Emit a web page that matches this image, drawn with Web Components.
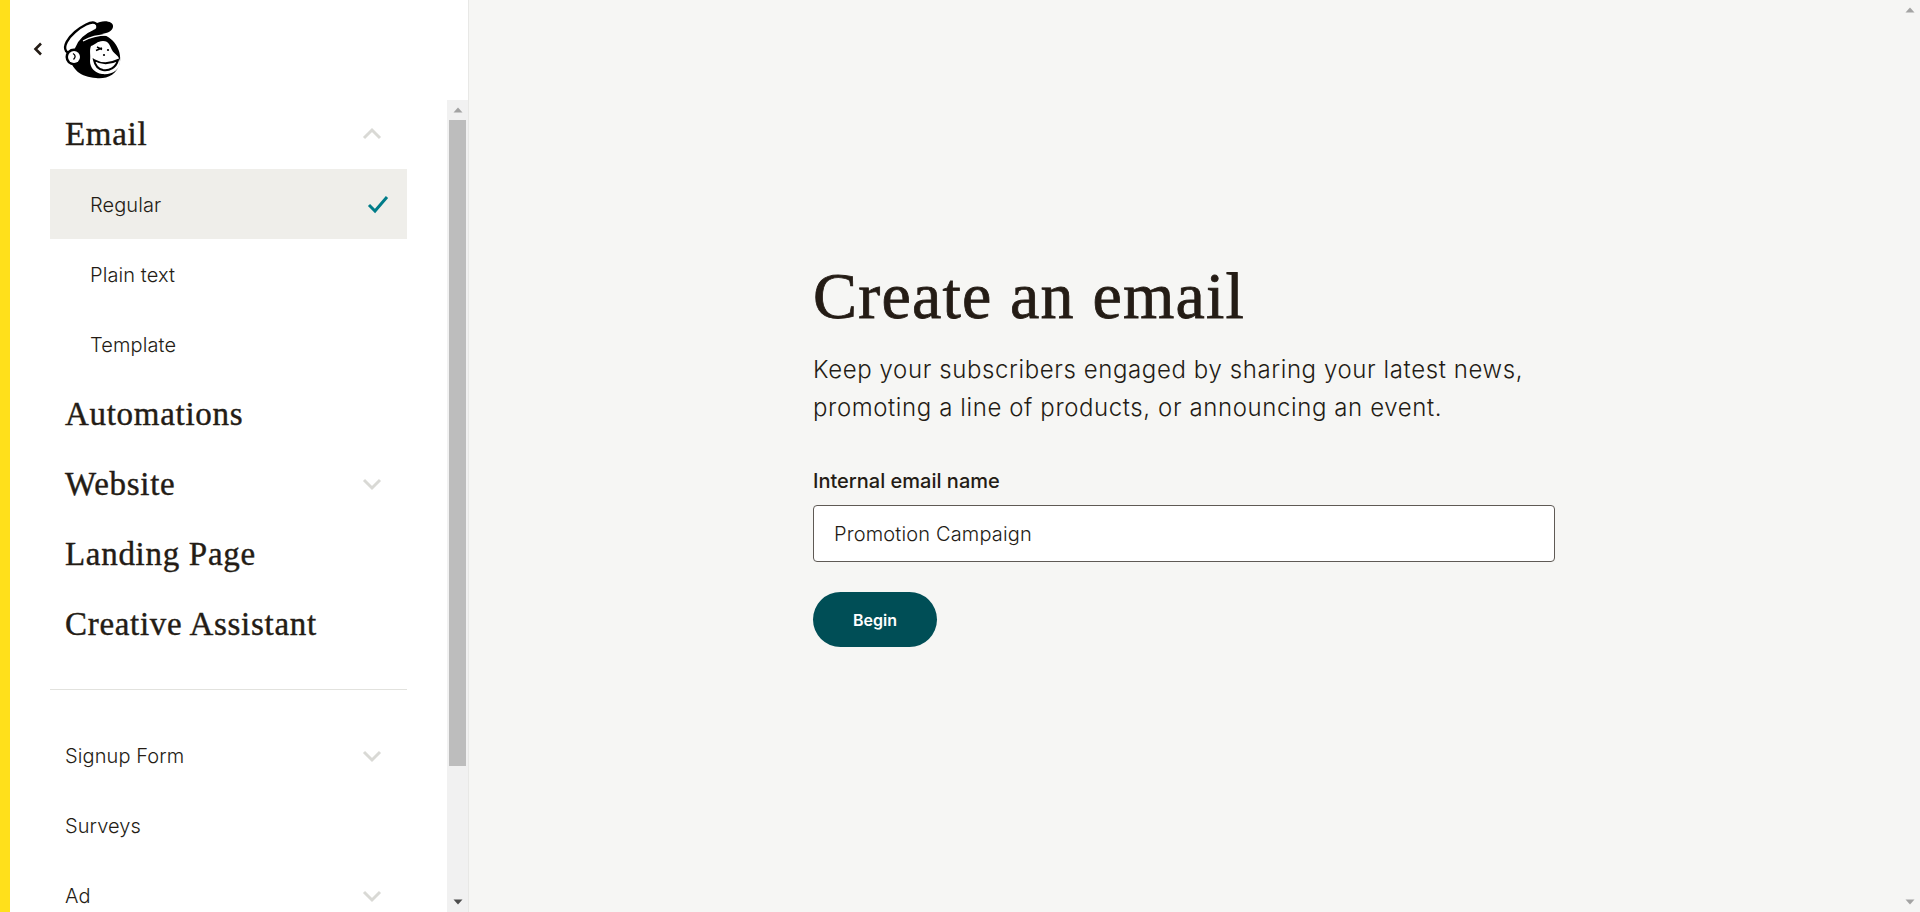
<!DOCTYPE html>
<html lang="en">
<head>
<meta charset="utf-8">
<title>Create an email</title>
<style>
  html, body { margin: 0; height: 100%; overflow: hidden; }
  body { font-family: Inter, "Liberation Sans", sans-serif; color: #241c15; }
</style>
</head>
<body>
<mc-app>
  <mc-sidebar slot="sidebar">
    <nav-item kind="head" chevron="up">Email</nav-item>
    <nav-item kind="sub" selected>Regular</nav-item>
    <nav-item kind="sub">Plain text</nav-item>
    <nav-item kind="sub">Template</nav-item>
    <nav-item kind="head">Automations</nav-item>
    <nav-item kind="head" chevron="down">Website</nav-item>
    <nav-item kind="head">Landing Page</nav-item>
    <nav-item kind="head">Creative Assistant</nav-item>
    <nav-rule></nav-rule>
    <nav-item chevron="down">Signup Form</nav-item>
    <nav-item>Surveys</nav-item>
    <nav-item chevron="down">Ad</nav-item>
  </mc-sidebar>
  <create-form slot="main"
    title="Create an email"
    label="Internal email name"
    value="Promotion Campaign"
    action="Begin">
    Keep your subscribers engaged by sharing your latest news,<br>promoting a line of products, or announcing an event.
  </create-form>
</mc-app>

<script>
// page frame: yellow edge, sidebar, main area, window scrollbar
class McApp extends HTMLElement {
  constructor() {
    super();
    this.attachShadow({ mode: 'open' }).innerHTML = `
      <style>
        :host { display: flex; height: 912px; background: #f6f6f4; }
        .edge { flex: 0 0 10px; background: #ffe01b; }
        main { flex: 1; min-width: 0; }
      </style>
      <div class="edge"></div>
      <slot name="sidebar"></slot>
      <main><slot name="main"></slot></main>
      <mc-scrollbar thumb="0" size="20" track="#f5f5f4"></mc-scrollbar>`;
  }
}

// sidebar with logo on top and the clipped nav list below
class McSidebar extends HTMLElement {
  constructor() {
    super();
    this.attachShadow({ mode: 'open' }).innerHTML = `
      <style>
        :host {
          display: flex;
          flex-direction: column;
          flex: 0 0 459px;
          box-sizing: border-box;
          background: #fff;
          border-right: 1px solid #e8e8e6;
        }
        header { flex: 0 0 100px; display: flex; align-items: flex-start; }
        .back { margin: 39px 0 0 20px; width: 16px; height: 20px; }
        .logo { margin: 10px 0 0 4px; width: 80px; height: 80px; }
        .body { flex: 1; min-height: 0; display: flex; }
        .list { flex: 1; min-width: 0; overflow: hidden; padding: 0 40px; }
        .inner { margin-top: -1px; }
      </style>
      <header>
        <svg class="back" viewBox="0 0 16 20"><path d="M11 4.500 5.500 10l5.500 5.500" fill="none" stroke="#241c15" stroke-width="2.600"/></svg>
        <svg class="logo" viewBox="0 0 80 80">
          <!-- head and cap -->
          <path d="M19 44C21 30 34 22 50 24 63 26 72 40 70 52 67 66 56 69 46 68 31 67 21 60 19 44Z" fill="#000"/>
          <path d="M41 15 50 12C56 10 64 12 63 17 62 21 58 23 52 24L41 26Z" fill="#000"/>
          <path d="M33 31C40 27 48 25 57 25" fill="none" stroke="#fff" stroke-width="1.300"/>
          <!-- brim -->
          <path d="M16 41C13 36 18 28 25 22 32 16 41 11 45 13 49 15 48 20 44 21 37 24 30 29 27 37 25 43 19 45 16 41Z" fill="#fff" stroke="#000" stroke-width="2.400"/>
          <!-- ear -->
          <circle cx="24" cy="47" r="8.500" fill="#000"/>
          <circle cx="24" cy="47" r="6" fill="#fff"/>
          <path d="M23 43.500q4 2.500 .5 6" fill="none" stroke="#000" stroke-width="1.300"/>
          <!-- face -->
          <path d="M41 36C45 35 47 31 53 31 59 31 60 36 62 40 64 44 70 46 70 52 70 60 62 65 52 64 45 63 40 58 40 51 41 45 39 41 41 36Z" fill="#fff"/>
          <path d="M46 40.500l6-2.500M47 37l5 2.500" stroke="#000" stroke-width="1.400" fill="none"/>
          <circle cx="58" cy="40" r="1.100" fill="#000"/>
          <circle cx="54" cy="45" r="1.100" fill="#000"/>
          <!-- smile -->
          <path d="M44 50C51 54 60 54 68 50 66 58 59 61 53 60 48 59 45 55 44 50Z" fill="#fff" stroke="#000" stroke-width="2"/>
        </svg>
      </header>
      <div class="body">
        <div class="list"><div class="inner"><slot></slot></div></div>
        <mc-scrollbar thumb="646" size="21" track="#f1f1f1"></mc-scrollbar>
      </div>`;
  }
}

// classic windows style scrollbar; thumb is the thumb height in px
class McScrollbar extends HTMLElement {
  connectedCallback() {
    const thumb = Number.parseInt(this.getAttribute('thumb'), 10);
    const size = this.getAttribute('size');
    this.attachShadow({ mode: 'open' }).innerHTML = `
      <style>
        :host {
          display: flex;
          flex-direction: column;
          flex: 0 0 ${size}px;
          width: ${size}px;
          background: ${this.getAttribute('track')};
        }
        .btn { flex: 0 0 20px; display: flex; align-items: center; justify-content: center; }
        .thumb { margin: 0 2px; height: ${thumb}px; background: #bdbdbd; }
        .gap { flex: 1; }
        svg { width: 10px; height: 6px; }
      </style>
      <div class="btn"><svg viewBox="0 0 10 6"><path d="M5 .5 9.500 5.500H.5Z" fill="#a3a3a3"/></svg></div>
      <div class="thumb"></div>
      <div class="gap"></div>
      <div class="btn"><svg viewBox="0 0 10 6"><path d="M5 5.500 9.500 .5H.5Z" fill="${thumb ? '#4d4d4d' : '#a3a3a3'}"/></svg></div>`;
  }
}

// one row of the sidebar nav
class NavItem extends HTMLElement {
  connectedCallback() {
    const chevron = this.getAttribute('chevron');
    const chevronPath = chevron === 'up' ? 'M2 12 10 4l8 8' : 'M2 4l8 8 8-8';
    this.attachShadow({ mode: 'open' }).innerHTML = `
      <style>
        :host {
          display: flex;
          align-items: center;
          justify-content: space-between;
          height: 70px;
          padding: 0 25px 0 15px;
          font: 300 20px/1 Inter, "Liberation Sans", sans-serif;
          letter-spacing: .1px;
          color: #241c15;
        }
        :host([kind="head"]) {
          font: 400 33px/1 "Liberation Serif", serif;
          letter-spacing: .7px;
          -webkit-text-stroke: .4px #241c15;
        }
        :host([kind="sub"]) { padding-left: 40px; }
        :host([kind="sub"]) span { padding-top: 2px; }
        :host([selected]) { background: #efeeea; padding-right: 17px; }
        .chev { width: 20px; height: 16px; fill: none; stroke: #d9d9d5; stroke-width: 3; }
        .check { width: 24px; height: 20px; fill: none; stroke: #007c89; stroke-width: 3; }
      </style>
      <span><slot></slot></span>
      ${chevron ? `<svg class="chev" viewBox="0 0 20 16"><path d="${chevronPath}"/></svg>` : ''}
      ${this.hasAttribute('selected') ? '<svg class="check" viewBox="0 0 24 20"><path d="M3 11l6 6L21 3"/></svg>' : ''}`;
  }
}

class NavRule extends HTMLElement {
  constructor() {
    super();
    this.attachShadow({ mode: 'open' }).innerHTML = `
      <style>
        :host { display: block; height: 1px; margin: 30px 0 31px; background: #e2e2de; }
      </style>`;
  }
}

// heading, intro text (slotted), name input and submit button
class CreateForm extends HTMLElement {
  connectedCallback() {
    this.attachShadow({ mode: 'open' }).innerHTML = `
      <style>
        :host {
          display: flex;
          flex-direction: column;
          align-items: flex-start;
          box-sizing: border-box;
          width: 742px;
          margin-left: 344px;
          padding-top: 254px;
          color: #241c15;
        }
        h1 {
          margin: 0;
          font: 400 66px/84px "Liberation Serif", serif;
          letter-spacing: 1.200px;
          -webkit-text-stroke: .8px #241c15;
        }
        p {
          margin: 13px 0 0;
          font: 300 24px/38px Inter, "Liberation Sans", sans-serif;
          letter-spacing: .6px;
        }
        label {
          margin-top: 40px;
          font: 500 20px/28px Inter, "Liberation Sans", sans-serif;
        }
        .field {
          box-sizing: border-box;
          width: 100%;
          height: 57px;
          margin-top: 10px;
          padding: 0 20px;
          display: flex;
          align-items: center;
          background: #fff;
          border: 1px solid #5f5a55;
          border-radius: 4px;
          font: 300 20px/1 Inter, "Liberation Sans", sans-serif;
          letter-spacing: .15px;
        }
        .begin {
          display: flex;
          align-items: center;
          justify-content: center;
          width: 124px;
          height: 55px;
          margin-top: 30px;
          border-radius: 28px;
          background: #004e56;
          color: #fff;
          font: 600 16px/1 Inter, "Liberation Sans", sans-serif;
        }
      </style>
      <h1>${this.getAttribute('title')}</h1>
      <p><slot></slot></p>
      <label>${this.getAttribute('label')}</label>
      <div class="field">${this.getAttribute('value')}</div>
      <div class="begin">${this.getAttribute('action')}</div>`;
  }
}

customElements.define('mc-app', McApp);
customElements.define('mc-sidebar', McSidebar);
customElements.define('mc-scrollbar', McScrollbar);
customElements.define('nav-item', NavItem);
customElements.define('nav-rule', NavRule);
customElements.define('create-form', CreateForm);
</script>
</body>
</html>
